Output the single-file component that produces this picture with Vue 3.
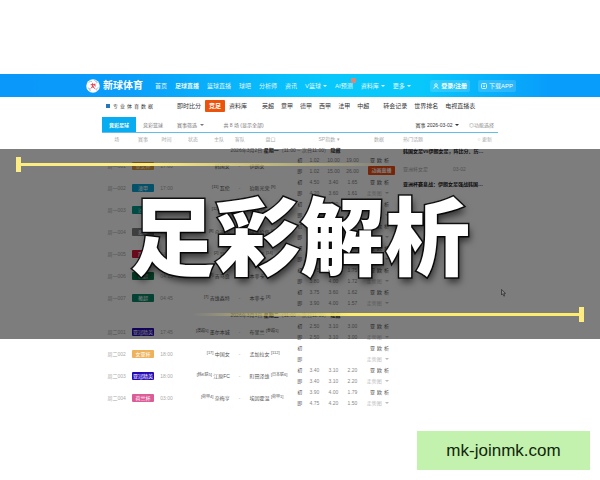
<template>
  <div class="page">
    <header class="top-bar">
      <div class="top-inner">
        <a href="#" class="logo">
          <svg class="logo-mark" viewBox="0 0 30 30" aria-hidden="true">
            <circle cx="15" cy="15" r="14.5" fill="#fff" />
            <path d="M6 8 L10 4 L13 7 M18 3 L24 7 L21 10 M4 19 L8 21 L9 26 M26 18 L22 22 L24 25" fill="none" stroke="#8a9ac0" stroke-width="1.6" />
            <path d="M10 12 H20 M14 9 V16 M10 20 L18 14 M12 15 L20 21 M18 10 L20 16" fill="none" stroke="#e2404f" stroke-width="2" />
          </svg>
          <span>新球体育</span>
        </a>
        <nav class="main-nav">
          <a v-for="item in mainNav" :key="item.name" href="#" :class="{ active: item.active }">
            {{ item.name }}<i v-if="item.more" class="caret"></i><i v-if="item.hot" class="hot"></i>
          </a>
        </nav>
        <div class="top-buttons">
          <button class="top-btn">
            <svg viewBox="0 0 12 12" aria-hidden="true"><circle cx="6" cy="4" r="2.6" /><path d="M1.5 11.5 Q2 7 6 7 Q10 7 10.5 11.5" /></svg>
            <b>登录/注册</b>
          </button>
          <button class="top-btn">
            <svg viewBox="0 0 12 12" aria-hidden="true"><rect x="1" y="1" width="10" height="10" rx="2" /><path d="M6 3 V8 M4 6 L6 8 L8 6" /></svg>
            下载APP
          </button>
        </div>
      </div>
    </header>

    <nav class="sub-nav">
      <span class="slogan"><i class="check"></i>专业体育数据</span>
      <div class="sub-group first">
        <a href="#">即时比分</a>
        <a href="#" class="hot-link">竞足</a>
        <a href="#">资料库</a>
      </div>
      <div class="sub-group leagues">
        <a v-for="name in leagues" :key="name" href="#">{{ name }}</a>
      </div>
      <div class="sub-group">
        <a v-for="name in extras" :key="name" href="#">{{ name }}</a>
      </div>
    </nav>

    <main class="content">
      <div class="tabs">
        <button :class="['tab', { active: tab === 'football' }]" @click="tab = 'football'">竞彩足球</button>
        <button :class="['tab', { active: tab === 'basket' }]" @click="tab = 'basket'">竞彩篮球</button>
        <button class="tab">赛事筛选 <i class="caret"></i></button>
        <span class="count">共 8 场 (显示全部)</span>
        <label class="date-pick">
          赛事
          <select v-model="date">
            <option>2026-03-02</option>
            <option>2026-03-03</option>
          </select><i class="caret"></i>
        </label>
        <button class="options">◎功能选择</button>
      </div>

      <div class="columns">
        <table class="matches">
          <colgroup>
            <col v-for="(w, i) in colWidths" :key="i" :style="{ width: w + '%' }" />
          </colgroup>
          <thead>
            <tr>
              <th>场</th>
              <th>赛事</th>
              <th>时间</th>
              <th class="pair"><span>状态</span><span>主队</span></th>
              <th>客队</th>
              <th>盘口</th>
              <th colspan="4">SP指数 ▾</th>
              <th>数据</th>
            </tr>
          </thead>
          <tbody v-for="group in groups" :key="group.day">
            <tr class="day">
              <td colspan="11">{{ group.day }} <b>{{ group.week }}</b><span>{{ group.range }}</span> <b>隐藏</b></td>
            </tr>
            <tr v-for="m in group.matches" :key="m.no" class="match">
              <td class="faint">{{ m.no }}</td>
              <td><span class="badge" :style="{ background: m.color }">{{ m.league }}</span></td>
              <td class="faint">{{ m.time }}</td>
              <td class="home"><sup>{{ m.homeRank }}</sup> {{ m.home }}</td>
              <td class="faint">-</td>
              <td class="away">{{ m.away }} <sup>{{ m.awayRank }}</sup></td>
              <td><div class="line">初</div><div class="line">即</div></td>
              <td v-for="k in 3" :key="k" class="odds">
                <div class="line">{{ m.first[k - 1] }}</div>
                <div class="line">{{ m.live[k - 1] }}</div>
              </td>
              <td class="data">
                <div class="line links"><a href="#">亚</a><a href="#">欧</a><a href="#">析</a></div>
                <div class="line">
                  <button v-if="m.play" class="play">动画直播</button>
                  <span v-else class="more">走势图 <i class="caret"></i></span>
                </div>
              </td>
            </tr>
          </tbody>
        </table>

        <aside class="news">
          <div class="news-head"><span>热门话题</span><span>○ 更新</span></div>
          <article v-for="n in news" :key="n.title">
            <a href="#">{{ n.title }}</a>
            <p>{{ n.meta }}</p>
          </article>
        </aside>
      </div>
    </main>

    <section class="banner">
      <div class="rule rule-top"></div>
      <h1>足彩解析</h1>
      <div class="rule rule-bottom"></div>
      <svg class="pointer" viewBox="0 0 12 20" aria-hidden="true">
        <path d="M1 1 V15 L4 12 L7 18 L9 17 L7 11 H11 Z" />
      </svg>
    </section>

    <div class="site-tag">mk-joinmk.com</div>
  </div>
</template>

<script setup>
import { ref } from 'vue';

const tab = ref('football');
const date = ref('2026-03-02');

const mainNav = [
  { name: '首页' },
  { name: '足球直播', active: true },
  { name: '篮球直播' },
  { name: '球吧' },
  { name: '分析师' },
  { name: '资讯' },
  { name: 'V篮球', more: true },
  { name: 'AI预测', hot: true },
  { name: '资料库', more: true },
  { name: '更多', more: true }
];
const leagues = ['英超', '意甲', '德甲', '西甲', '法甲', '中超'];
const extras = ['转会记录', '世界排名', '电视直播表'];

// 各列宽度 (%)
const colWidths = [10, 8, 8, 19, 4, 17, 3, 7, 6, 7, 11];

const groups = [
  {
    day: '2026年3月2日', week: '星期一', range: '（11:00 -- 次日11:00）',
    matches: [
      { no: '周一001', league: '亚女杯', color: '#e0a040', time: '17:00', homeRank: '', home: '韩国女', away: '伊朗女', awayRank: '', first: ['1.02', '10.00', '19.00'], live: ['1.02', '15.00', '26.00'], play: true },
      { no: '周一002', league: '澳甲', color: '#0ba5d8', time: '17:00', homeRank: '[11]', home: '瓦伦', away: '珀斯光荣', awayRank: '[9]', first: ['4.50', '3.40', '1.65'], live: ['4.20', '3.60', '1.61'] },
      { no: '周一003', league: '沙特', color: '#009c8c', time: '20:00', homeRank: '[12]', home: '海湾', away: '吉达', awayRank: '[4]', first: ['2.10', '3.20', '3.00'], live: ['2.05', '3.30', '3.10'] },
      { no: '周一004', league: '意甲', color: '#808080', time: '01:30', homeRank: '[8]', home: '乌迪内', away: '佛罗伦萨', awayRank: '[17]', first: ['2.40', '3.00', '2.80'], live: ['2.50', '3.00', '2.70'] },
      { no: '周一005', league: '西甲', color: '#d81838', time: '04:00', homeRank: '[2]', home: '皇马', away: '赫塔菲', awayRank: '[14]', first: ['1.20', '6.00', '9.50'], live: ['1.22', '5.80', '9.00'] },
      { no: '周一006', league: '葡超', color: '#0c7c50', time: '04:15', homeRank: '[3]', home: '吉马良', away: '本菲卡', awayRank: '[1]', first: ['3.75', '3.60', '1.75'], live: ['3.80', '4.00', '1.72'] },
      { no: '周一007', league: '葡超', color: '#0a8a68', time: '04:45', homeRank: '[7]', home: '吉维森特', away: '本菲卡', awayRank: '[3]', first: ['3.75', '3.60', '1.62'], live: ['3.90', '4.00', '1.57'] }
    ]
  },
  {
    day: '2026年3月3日', week: '星期二', range: '（11:00 -- 次日11:00）',
    matches: [
      { no: '周二001', league: '亚冠精英', color: '#2408b8', time: '17:45', homeRank: '[澳超5]', home: '墨尔本城', away: '布里兰', awayRank: '[泰超1]', first: ['2.50', '3.10', '3.00'], live: ['2.50', '3.10', '3.00'] },
      { no: '周二002', league: '女亚杯', color: '#efb25c', time: '18:00', homeRank: '[17]', home: '中国女', away: '孟加拉女', awayRank: '[112]', first: [], live: [] },
      { no: '周二003', league: '亚冠精英', color: '#2408b8', time: '18:00', homeRank: '[韩K联5]', home: '江原FC', away: '町田泽维', awayRank: '[日本联6]', first: ['3.40', '3.10', '2.20'], live: ['3.40', '3.10', '2.20'] },
      { no: '周二004', league: '荷兰杯', color: '#dc5c98', time: '03:00', homeRank: '[荷甲4]', home: '奈梅亨', away: '埃因霍温', awayRank: '[荷甲1]', first: ['3.90', '4.00', '1.79'], live: ['4.75', '4.20', '1.50'] }
    ]
  }
];

const news = [
  { title: '韩国女足vs伊朗女足，阵比分、历…', meta: '亚洲杯女足　　　　　03-02' },
  { title: '亚洲杯赛息战：伊朗女足强战韩国…', meta: '' }
];
</script>

<style>
body { margin: 0; background: #fff; }
</style>

<style scoped>
.page { position: relative; box-sizing: border-box; min-height: 100vh; padding-top: 74px; overflow: hidden; background: #fff; font-family: "Liberation Sans", "Noto Sans CJK SC", sans-serif; font-size: 6px; line-height: 8px; color: #555; }
a { color: inherit; text-decoration: none; white-space: nowrap; }
button, select { margin: 0; padding: 0; border: none; background: none; font: inherit; color: inherit; cursor: pointer; white-space: nowrap; }
.caret { display: inline-block; margin-left: 2px; border: 2px solid transparent; border-top-color: currentColor; border-bottom: none; vertical-align: 1px; }

/* 顶部导航 */
.top-bar { background: linear-gradient(90deg, #0a98fa 0%, #0a9dfa 20%, #08c8fb 55%, #08c8fb 70%, #089cfb 92%); color: #fff; }
.top-inner { display: flex; align-items: center; width: 72%; height: 23px; margin: 0 auto; }
.logo { display: flex; align-items: center; gap: 3px; margin-left: 2px; font-size: 10px; font-weight: bold; }
.logo-mark { width: 14px; height: 14px; }
.main-nav { display: flex; flex: 1; gap: 8px; margin-left: 12px; opacity: 0.9; }
.main-nav a { position: relative; }
.main-nav .active { font-weight: bold; }
.hot { position: absolute; top: -4px; right: -3px; width: 5px; height: 5px; border-radius: 1px; background: #f0806c; }
.top-buttons { display: flex; gap: 8px; }
.top-btn { display: flex; align-items: center; gap: 2px; height: 12px; padding: 0 3px; border-radius: 2px; background: rgba(255, 255, 255, 0.15); }
.top-btn svg { width: 6px; height: 6px; fill: none; stroke: #fff; stroke-width: 1.5; }

/* 二级导航 */
.sub-nav { display: flex; align-items: center; width: 66%; height: 18px; margin: 0 auto; color: #333; }
.slogan { display: flex; align-items: center; gap: 3px; margin-left: 4px; font-size: 5px; letter-spacing: 2px; }
.check { width: 4px; height: 4px; background: #2478b8; }
.sub-group { display: flex; align-items: center; gap: 7px; }
.first { gap: 4px; margin-left: 22px; }
.leagues { margin: 0 14px 0 15px; }
.hot-link { padding: 2px 4px; border-radius: 1px; background: #ec540c; color: #fff; font-weight: bold; }

/* 标签栏 */
.content { width: 66%; margin: 0 auto; }
.tabs { display: flex; align-items: center; height: 17px; border-bottom: 1px solid #62bdea; color: #777; font-size: 5px; }
.tab { align-self: flex-end; height: 15px; padding: 0 7px; }
.tab.active { background: #08acf0; color: #fff; font-weight: bold; }
.count { margin-left: 12px; padding-top: 2px; }
.date-pick { margin-left: auto; padding-top: 2px; color: #333; }
.date-pick select { appearance: none; height: 8px; }
.options { margin: 2px 4px 0 10px; color: #888; }

/* 赛事列表 */
.columns { display: flex; }
.matches { width: 74%; border-collapse: collapse; table-layout: fixed; text-align: center; white-space: nowrap; font-size: 5px; line-height: 8px; }
th, td { padding: 0; }
th { height: 12px; font-weight: normal; color: #aaa; }
.pair span { margin: 0 8px; }
.day td { height: 10px; padding-left: 74px; color: #777; }
tbody + tbody .day td { height: 12px; }
.day b { color: #333; }
.match td { height: 22px; }
.match .faint { color: #aaa; }
.badge { display: block; height: 8px; margin: 0 1px; border-radius: 1px; color: #fff; line-height: 8px; }
.home { padding-right: 4px; text-align: right; }
.away { padding-left: 4px; text-align: left; }
sup { font-size: 4px; line-height: 4px; vertical-align: 2px; }
.line { height: 11px; line-height: 11px; }
.odds { color: #888; }
.data { text-align: right; }
.links { display: flex; justify-content: flex-end; gap: 2px; padding-right: 6px; color: #555; }
.more { padding-right: 6px; color: #bbb; }
.play { width: 27px; height: 9px; border-radius: 1px; background: #f04c10; color: #fff; font-weight: bold; line-height: 9px; vertical-align: top; }

/* 热门话题 */
.news { flex: 1; min-width: 0; padding-left: 8px; font-size: 5px; }
.news-head { display: flex; justify-content: space-between; height: 14px; padding-right: 6px; color: #aaa; line-height: 12px; }
.news article { height: 33px; }
.news article a { display: block; color: #222; font-weight: bold; }
.news p { margin: 10px 0 0; color: #aaa; }

/* 横幅标题 */
.banner { position: absolute; top: 149px; left: 0; right: 0; height: 190px; background: rgba(0, 0, 0, 0.51); }
.banner h1 { margin: 0; padding-top: 33px; text-align: center; color: #fff; font-family: "Noto Sans CJK SC", sans-serif; font-size: 85px; font-weight: 900; line-height: 100px; -webkit-text-stroke: 3px #111; paint-order: stroke fill; text-shadow: 2px 5px 7px rgba(0, 0, 0, 0.6); }
.rule { position: absolute; height: 3px; }
.rule::before { content: ""; position: absolute; top: -6px; width: 5px; height: 15px; background: #fdec82; }
.rule-top { top: 14px; left: 16px; right: 34%; background: linear-gradient(90deg, #fdec82 35%, rgba(253, 216, 100, 0)); }
.rule-top::before { left: 0; }
.rule-bottom { top: 164px; left: 32%; right: 16px; background: linear-gradient(270deg, #fdec70 60%, rgba(253, 216, 100, 0)); }
.rule-bottom::before { right: 0; }
.pointer { position: absolute; top: 140px; left: 501px; width: 5px; height: 8px; fill: #888; stroke: #333; stroke-width: 2; }

.site-tag { position: absolute; right: 10px; bottom: 10px; width: 173px; background: #c3f1ae; color: #10260c; font-family: "Liberation Sans", Arial, sans-serif; font-size: 17px; line-height: 39px; text-align: center; }
</style>
